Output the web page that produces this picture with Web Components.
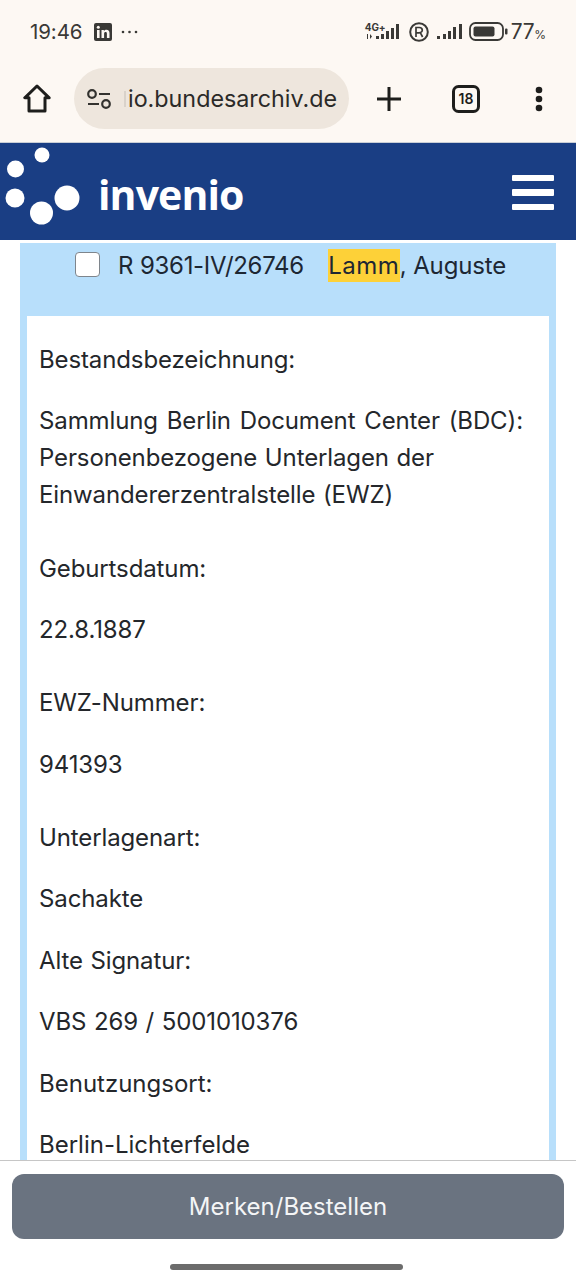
<!doctype html>
<html lang="de"><head><meta charset="utf-8"><title>invenio</title>
<style>
html,body{margin:0;height:1280px;overflow:hidden;background:#fff}
body{display:flex;flex-direction:column;font-family:"Inter","Noto Sans",sans-serif;color:#212529}
</style></head><body>
<x-chrome></x-chrome>
<x-banner></x-banner>
<x-record signature="R 9361-IV/26746">
  <span slot="hit">Lamm</span><span slot="rest">, Auguste</span>
  <x-field label="Bestandsbezeichnung:" gap="12.3"><span style="word-spacing:2.2px">Sammlung Berlin Document Center (BDC):</span><br>Personenbezogene Unterlagen der<br>Einwandererzentralstelle (EWZ)</x-field>
  <x-field label="Geburtsdatum:" gap="12.3">22.8.1887</x-field>
  <x-field label="EWZ-Nummer:" gap="12.3">941393</x-field>
  <x-field label="Unterlagenart:" gap=".5">Sachakte</x-field>
  <x-field label="Alte Signatur:" gap=".5">VBS 269 / 5001010376</x-field>
  <x-field label="Benutzungsort:" style="letter-spacing:0">Berlin-Lichterfelde</x-field>
</x-record>
<x-actionbar label="Merken/Bestellen"></x-actionbar>
<script>
function def(name, html, init){
  customElements.define(name, class extends HTMLElement{
    constructor(){super();this.attachShadow({mode:'open'}).innerHTML=html;}
    connectedCallback(){ if(init) init(this,this.shadowRoot); }
  });
}
def('x-chrome',`<style>
:host{display:block;height:143px;background:#fdf8f3;color:#22211f;box-sizing:border-box;border-bottom:1px solid #c9ced6;font-family:"Inter",sans-serif}
.status{height:68px;box-sizing:border-box;padding:19px 30px 0 30px;display:flex;align-items:flex-start;font-size:20.5px;color:#3a3936}
.time{line-height:25px;width:54px;letter-spacing:-.1px}
.li{margin:4px 0 0 10px}
.more{margin:5px 0 0 9px}
.right{margin-left:auto;display:flex;align-items:flex-start}
.pct{font-size:21px;line-height:25px;margin-left:3px;letter-spacing:-.4px}
.pct small{font-size:12px;letter-spacing:0}
.net{position:relative;width:37px;height:24px;margin:1px 0 0 0}
.net b{position:absolute;left:0;top:2px;font-size:10px;line-height:10px;font-weight:700;letter-spacing:-.2px}
.bar{height:61px;display:flex;align-items:center;padding-left:23px}
.pill{margin-left:23px;width:275px;height:61px;border-radius:31px;background:#eee6dd;display:flex;align-items:center;box-sizing:border-box;padding-left:13px;overflow:hidden}
.url{font-size:23.3px;margin-left:2px;white-space:nowrap;color:#2b2a28}
.fade{display:block;width:2px;height:16px;margin-left:13px;background:#d9d2ca;flex:none}
</style>
<div class="status"><span class="time">19:46</span>
<svg class="li" width="18" height="18" viewBox="0 0 18 18"><rect width="18" height="18" rx="2" fill="#3a3936"/><rect x="3" y="7" width="2.6" height="8" fill="#fdf8f3"/><circle cx="4.3" cy="4.3" r="1.5" fill="#fdf8f3"/><path d="M7.5 7h2.4v1.2c.6-.9 1.5-1.4 2.6-1.4 2 0 3 1.2 3 3.4V15h-2.6v-4.3c0-1-.4-1.6-1.3-1.6-1 0-1.5.7-1.5 1.700V15H7.500z" fill="#fdf8f3"/></svg>
<svg class="more" width="17" height="16" viewBox="0 0 17 16"><g fill="#3a3936"><circle cx="2" cy="8" r="1.300"/><circle cx="8.500" cy="8" r="1.300"/><circle cx="15" cy="8" r="1.300"/></g></svg>
<div class="right">
<div class="net"><b>4G+</b><svg width="37" height="24" viewBox="0 0 37 24" style="position:absolute;left:0;top:0"><g fill="#3a3936"><path d="M2 14v5h1v-5zM5 14l2 2.500-2 2.500zM11 16h3v3h-3zM16 14h3v5h-3zM21 11h3v8h-3zM26 8h3v11h-3zM31 4h3v15h-3z"/></g></svg></div>
<svg width="20" height="20" viewBox="0 0 20 20" style="margin:3px 0 0 7px"><circle cx="10" cy="10" r="8.800" fill="none" stroke="#3a3936" stroke-width="2"/><path d="M7 15V5.500h3.300c2 0 3 1 3 2.700 0 1.300-.7 2.200-2 2.500l2.300 4.300M7 10.800h3.600" fill="none" stroke="#3a3936" stroke-width="1.700"/></svg>
<svg width="27" height="20" viewBox="0 0 27 20" style="margin:3px 0 0 8px"><g fill="#3a3936"><path d="M0 14h3v3H0zM6 12h3v5H6zM11 9h3v8h-3zM16 5h3v12h-3zM22 2h3v15h-3z"/></g></svg>
<svg width="39" height="20" viewBox="0 0 39 20" style="margin:3px 0 0 5px"><rect x="1" y="1" width="33" height="17" rx="5.500" fill="none" stroke="#3a3936" stroke-width="1.800"/><rect x="4.500" y="4.500" width="21" height="10" rx="2" fill="#3a3936"/><rect x="36" y="6.500" width="2.500" height="6" rx="1" fill="#3a3936"/></svg>
<span class="pct">77<small>%</small></span></div></div>
<div class="bar">
<svg width="28" height="29" viewBox="0 0 28 29"><path d="M14 2 1.800 13.800h4.200V27h16V13.800h4.200z" fill="none" stroke="#1e1e1c" stroke-width="3" stroke-linejoin="round"/></svg>
<div class="pill"><svg width="24" height="20" viewBox="0 0 24 20" style="flex:none"><g fill="none" stroke="#33322f" stroke-width="2.200"><circle cx="5" cy="5" r="3.800"/><path d="M12 5h11M1 15h11"/><circle cx="19" cy="15" r="3.800"/></g></svg><i class="fade"></i><span class="url">io.bundesarchiv.de</span></div>
<svg width="24" height="24" viewBox="0 0 24 24" style="margin-left:28px"><path d="M12 0v24M0 12h24" stroke="#1e1e1c" stroke-width="3"/></svg>
<svg width="28" height="28" viewBox="0 0 28 28" style="margin-left:51px"><rect x="1.500" y="1.500" width="25" height="25" rx="5" fill="none" stroke="#1e1e1c" stroke-width="3"/><text x="14" y="19" font-size="14" font-weight="600" text-anchor="middle" font-family="Inter" fill="#1e1e1c">18</text></svg>
<svg width="8" height="26" viewBox="0 0 8 26" style="margin-left:55px"><g fill="#1e1e1c"><circle cx="4" cy="4" r="3.300"/><circle cx="4" cy="13" r="3.300"/><circle cx="4" cy="22" r="3.300"/></g></svg>
</div>`);
def('x-banner',`<style>
:host{display:flex;height:97px;background:#1a3e84;align-items:center;position:relative;padding-left:98px;padding-right:22px;box-sizing:border-box;flex:none;color:#fff}
svg.logo{position:absolute;left:0;top:0}
.t{font:700 41px/1 "Open Sans",sans-serif;letter-spacing:-.9px;margin-top:6px;flex:1}
.m{display:grid;gap:8px;width:42px;margin-top:2px}
.m i{display:block;height:6.500px;background:#fff;border-radius:1px}
</style>
<svg class="logo" width="90" height="97" viewBox="0 143 90 97" fill="#fff"><circle cx="42" cy="155" r="7.500"/><circle cx="15.500" cy="169" r="8.500"/><circle cx="15" cy="198" r="9.500"/><circle cx="67" cy="198" r="12.500"/><circle cx="41.500" cy="213" r="11.500"/></svg>
<span class="t">invenio</span><div class="m"><i></i><i></i><i></i></div>`);
def('x-record',`<style>
:host{display:block;flex:1;min-height:0;overflow:hidden;padding-top:3px;background:#fff}
.card{margin:0 20px;background:#b8dffb;padding:0 7px;height:100%;box-sizing:border-box}
.head{height:73px;display:flex;align-items:flex-start;padding:6px 0 0 48px;box-sizing:border-box;font-size:24px;color:#1d2733}
.cb{width:25px;height:25px;box-sizing:border-box;background:#fff;border:1.500px solid #7e858c;border-radius:4px;margin:3px 18px 0 0;flex:none}
.sig{line-height:33px;margin-right:24px;letter-spacing:-.33px;word-spacing:.5px}
.hl{background:#fdd138;line-height:33px;display:inline-block;padding:0 .5px;letter-spacing:.5px}
.r{line-height:33px;letter-spacing:-.15px}
.body{background:#fff;height:100%;padding:25px 12px 0}
</style>
<div class="card"><div class="head"><span class="cb"></span><span class="sig"></span><span class="hl"><slot name="hit"></slot></span><span class="r"><slot name="rest"></slot></span></div>
<div class="body"><slot></slot></div></div>`,(el,s)=>{s.querySelector('.sig').textContent=el.getAttribute('signature')});
def('x-field',`<style>
:host{display:block;font-size:24px;line-height:37px;color:#24272b;white-space:nowrap;letter-spacing:-.12px;word-spacing:1px}
p{margin:0 0 24.2px}
</style><p class="l"></p><p><slot></slot></p>`,(el,s)=>{s.querySelector('.l').textContent=el.getAttribute('label');
 if(el.hasAttribute('gap')) el.style.paddingBottom=el.getAttribute('gap')+'px'});
def('x-actionbar',`<style>
:host{display:block;height:120px;flex:none;background:#fff;border-top:1px solid #c6c6c6;box-sizing:border-box;padding:13px 12px 0;position:relative}
.btn{height:65px;background:#6a7380;border-radius:12px;color:#f4f5f6;display:flex;align-items:center;justify-content:center;font-size:24px}
.home{width:233px;height:6px;background:#6c6c6c;border-radius:3px;margin:25px 0 0 158px}
</style><div class="btn"></div><div class="home"></div>`,(el,s)=>{s.querySelector('.btn').textContent=el.getAttribute('label')});
</script>
</body></html>
